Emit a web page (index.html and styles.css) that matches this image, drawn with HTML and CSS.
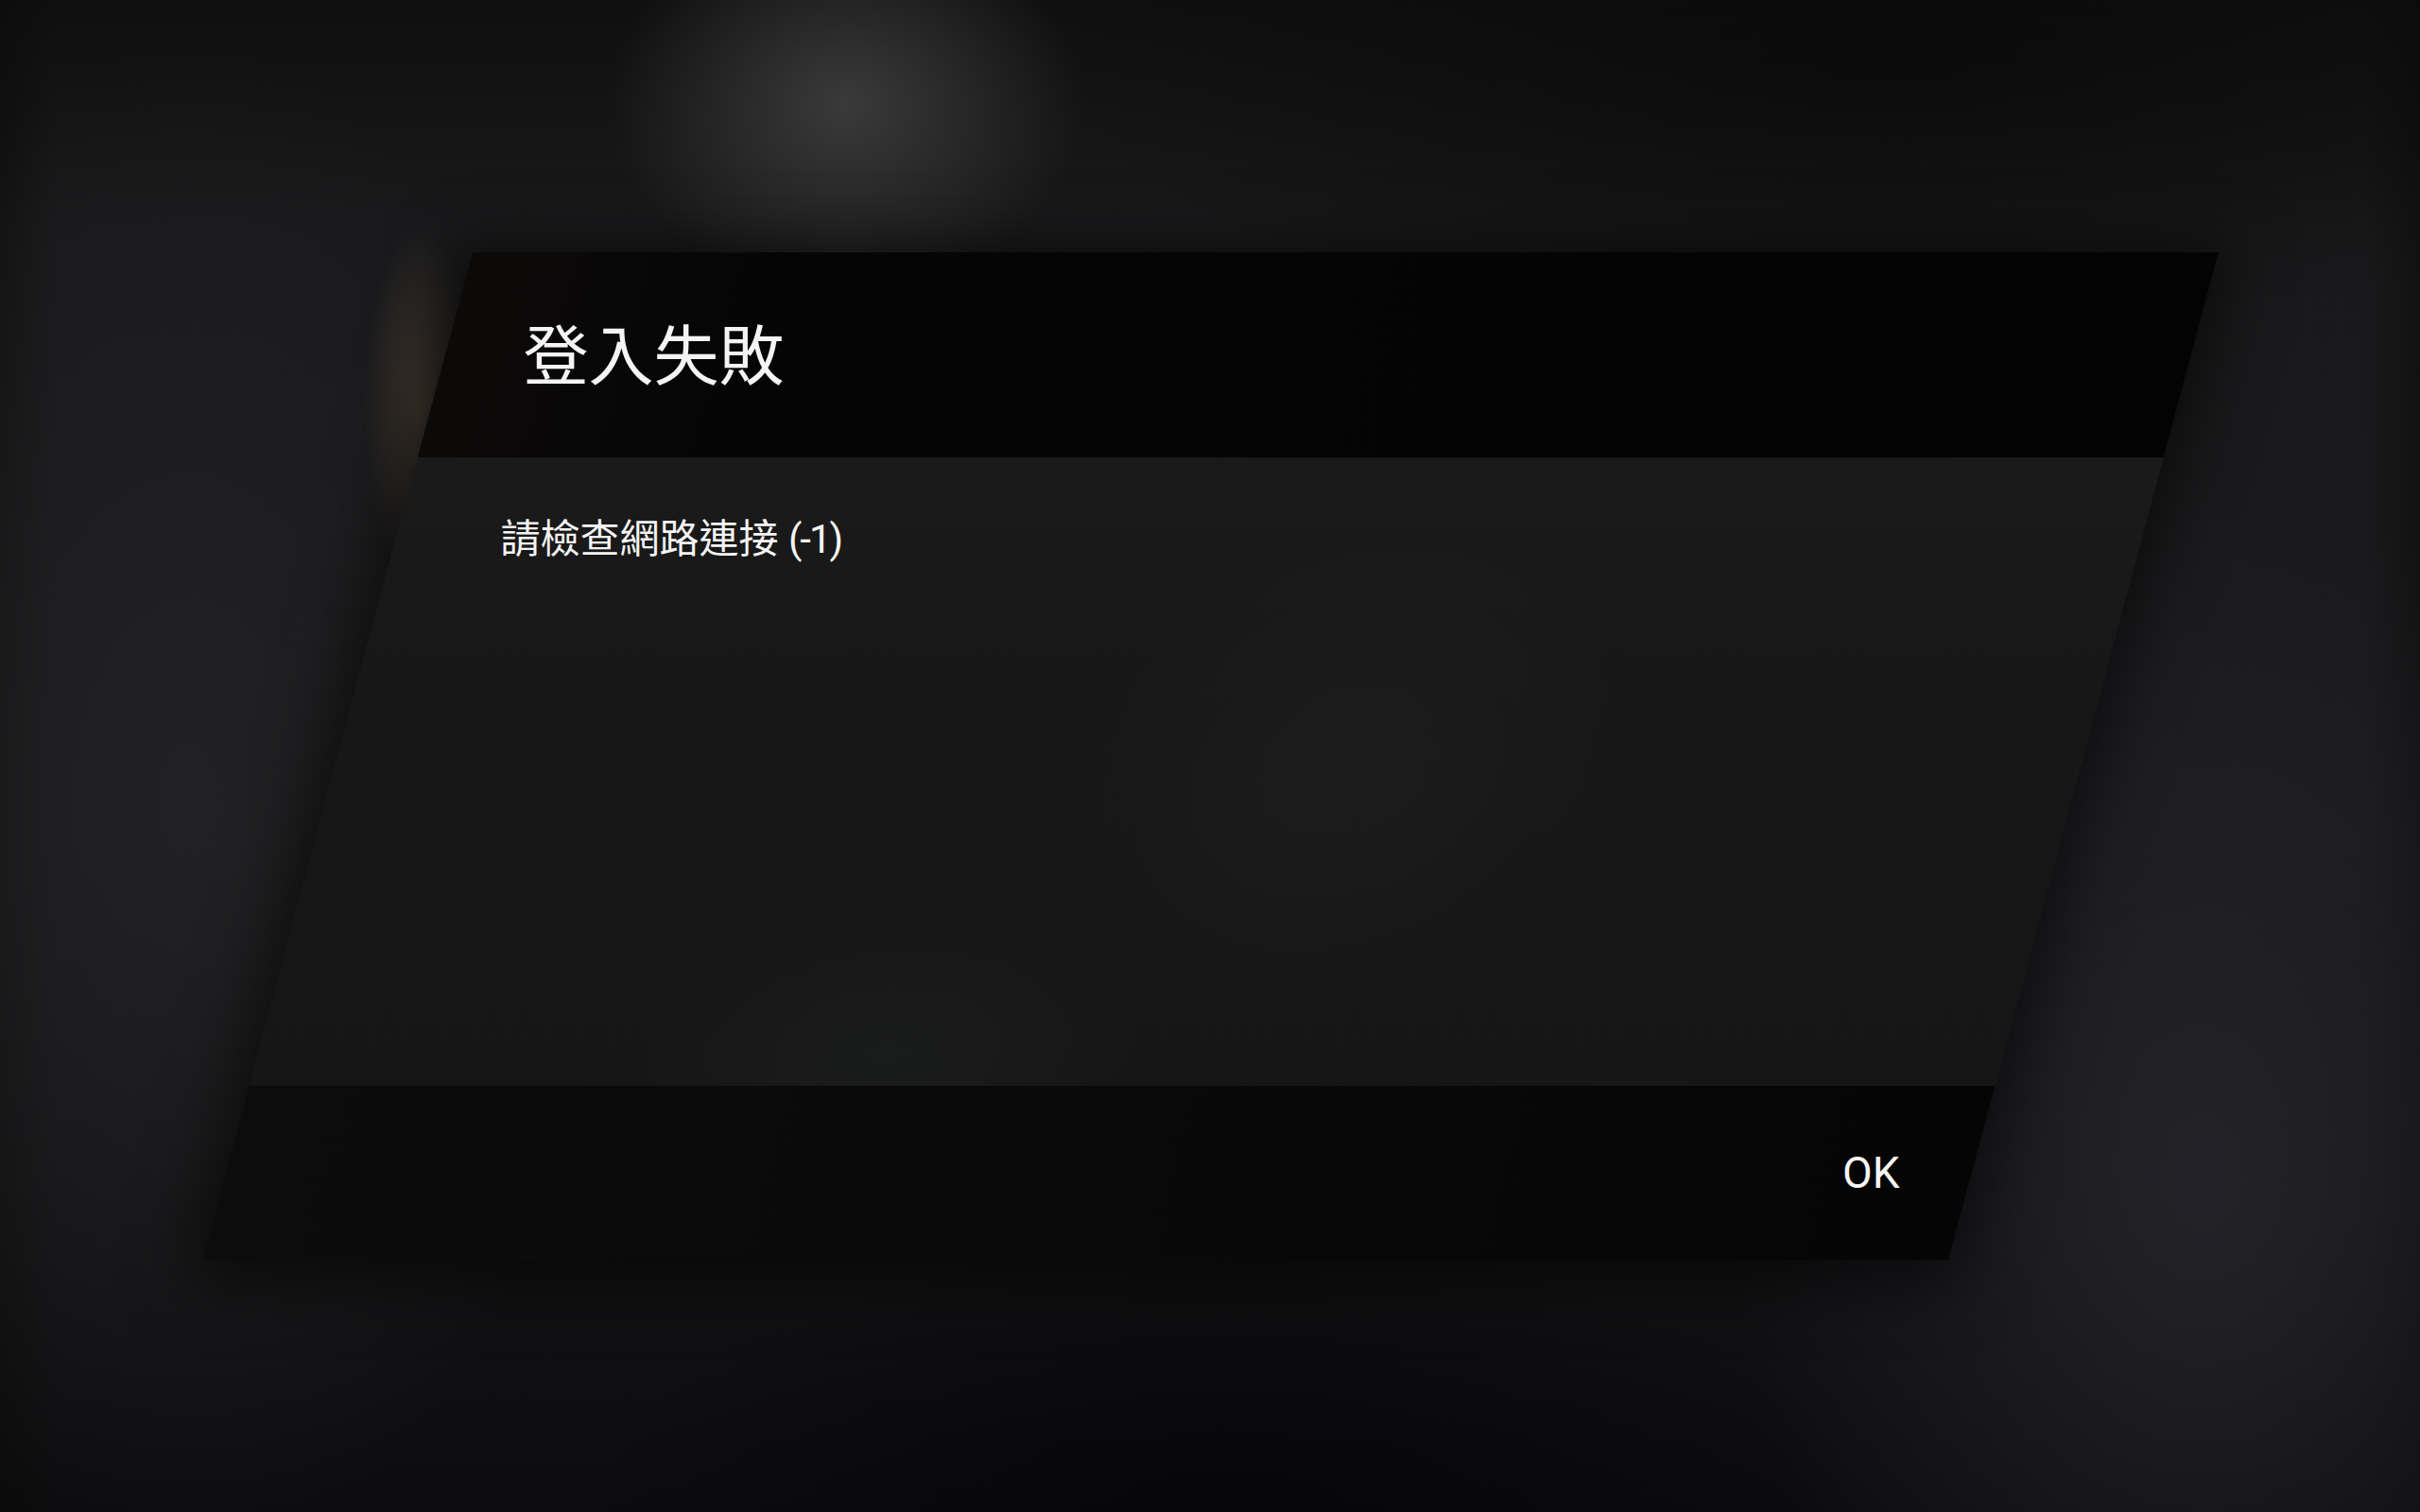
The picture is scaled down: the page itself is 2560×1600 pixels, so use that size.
FILE: index.html
```html
<!DOCTYPE html>
<html lang="zh-Hant">
<head>
<meta charset="utf-8">
<title>登入失敗</title>
<link rel="stylesheet" href="styles.css">
</head>
<body>
<div class="stage">
  <div class="dialog">
    <div class="dlg-head"><h1 class="title">登入失敗</h1></div>
    <div class="dlg-body"><p class="msg">請檢查網路連接 <span class="code">(-1)</span></p></div>
    <div class="dlg-foot"><button class="ok">OK</button></div>
  </div>
</div>
</body>
</html>
```
FILE: styles.css
```css
html, body {
  margin: 0;
  padding: 0;
}
body {
  width: 2560px;
  height: 1600px;
  overflow: hidden;
  font-family: "Noto Sans CJK TC", "Noto Sans", sans-serif;
  color: #f4f4f4;
  background:
    radial-gradient(ellipse 250px 210px at 895px 110px, rgba(62,62,62,0.9), rgba(40,40,40,0) 100%),
    radial-gradient(ellipse 60px 190px at 445px 430px, rgba(105,86,66,0.5), rgba(60,50,40,0) 100%),
    radial-gradient(ellipse 500px 750px at 2330px 1250px, rgba(36,36,42,0.9), rgba(30,30,36,0) 100%),
    radial-gradient(ellipse 700px 320px at 1300px 1620px, rgba(4,4,6,0.8), rgba(4,4,6,0) 100%),
    radial-gradient(ellipse 900px 300px at 2000px 60px, rgba(8,8,8,0.7), rgba(8,8,8,0) 100%),
    radial-gradient(ellipse 450px 800px at 200px 850px, rgba(34,34,36,0.9), rgba(30,30,32,0) 100%),
    linear-gradient(90deg, rgba(10,10,10,0.5) 0px, rgba(10,10,10,0) 60px, rgba(10,10,10,0) 2500px, rgba(10,10,10,0.5) 2560px),
    linear-gradient(180deg, #0f0f0f 0%, #19191b 15%, #1a1a1c 55%, #131315 80%, #0c0c0e 100%);
}
.stage {
  height: 1600px;
  display: flex;
  align-items: center;
  justify-content: center;
}
.dialog {
  width: 1847px;
  height: 1066px;
  display: flex;
  flex-direction: column;
  position: relative;
  isolation: isolate;
}
.dialog::before {
  content: "";
  position: absolute;
  inset: 0;
  transform: skewX(-15deg);
  box-shadow: 0 10px 70px 12px rgba(0,0,0,0.6);
  z-index: -2;
}
.dlg-head, .dlg-body, .dlg-foot {
  position: relative;
  display: flex;
  align-items: center;
}
.dlg-head::before, .dlg-body::before, .dlg-foot::before {
  content: "";
  position: absolute;
  inset: 0;
  z-index: -1;
  transform: skewX(-15deg);
}
.dlg-head {
  height: 217px;
  padding-left: 197px;
}
.dlg-head::before {
  transform-origin: 50% 533px;
  background: linear-gradient(90deg, #0c0a09 0%, #050505 18%, #030303 100%);
}
.title {
  margin: 0;
  font-size: 69px;
  font-weight: 400;
  line-height: 1;
  letter-spacing: 0;
  margin-top: -6px;
}
.dlg-body {
  height: 665px;
  align-items: flex-start;
  padding-left: 173px;
  padding-top: 62px;
  box-sizing: border-box;
}
.dlg-body::before {
  transform-origin: 50% 316px;
  background:
    radial-gradient(ellipse 300px 260px at 58% 50%, rgba(255,255,255,0.025), rgba(255,255,255,0) 100%),
    radial-gradient(ellipse 260px 140px at 36% 95%, rgba(60,80,70,0.10), rgba(60,80,70,0) 100%),
    linear-gradient(180deg, #1a1a1a 0%, #171717 40%, #161616 100%);
}
.msg {
  margin: 0;
  font-family: Roboto, "Noto Sans CJK TC", sans-serif;
  font-size: 42px;
  line-height: 50px;
  font-weight: 400;
}
.code {
  letter-spacing: -2px;
}
.dlg-foot {
  height: 184px;
  justify-content: flex-end;
  padding-right: 194px;
}
.dlg-foot::before {
  transform-origin: 50% -349px;
  background: linear-gradient(90deg, #0c0c0c 0%, #090909 50%, #050505 100%);
}
.ok {
  background: none;
  border: 0;
  padding: 0;
  margin: 0;
  color: #f6f6f6;
  font-family: Roboto, "Liberation Sans", sans-serif;
  font-size: 46px;
  font-weight: 400;
  line-height: 1;
  letter-spacing: 0;
  cursor: pointer;
}
```
